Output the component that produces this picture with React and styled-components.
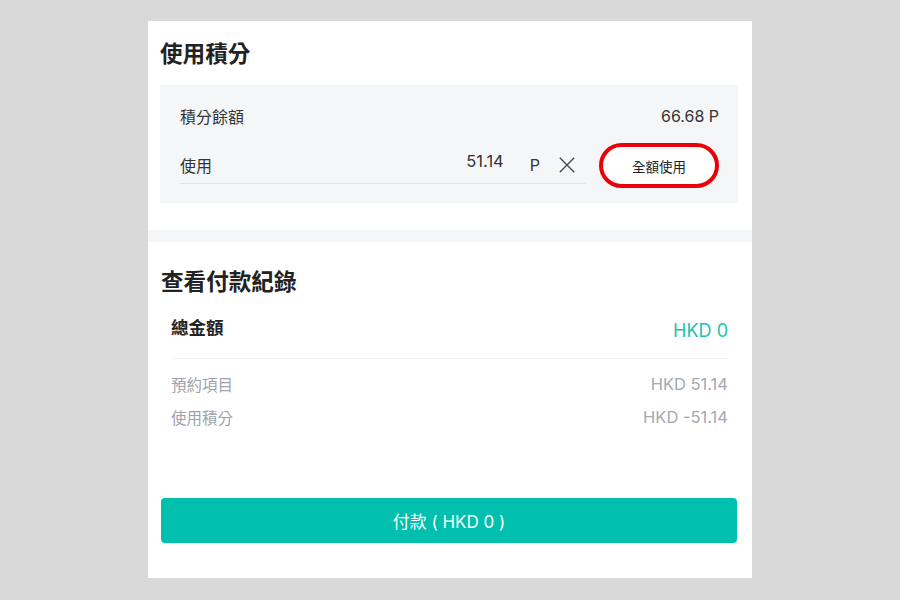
import React from "react";
import styled, { createGlobalStyle } from "styled-components";

const GlobalStyle = createGlobalStyle`
  html, body {
    margin: 0;
    padding: 0;
    background: #d9d9d9;
  }
  body {
    font-family: Inter, "Noto Sans CJK TC", sans-serif;
    color: #222;
  }
`;

const Page = styled.div`
  display: flex;
  justify-content: center;
  padding-top: 21px;
  height: 600px;
  box-sizing: border-box;
`;

const Card = styled.div`
  width: 604px;
  height: 557px;
  background: #fff;
  display: flex;
  flex-direction: column;
`;

const Section = styled.section`
  padding: ${props => props.pad};
`;

const Title = styled.h2`
  margin: 0;
  font-family: "Noto Sans CJK TC", sans-serif;
  font-size: 22.6px;
  line-height: 30px;
  font-weight: 700;
  color: #222;
`;

const PointsBox = styled.div`
  margin-top: 17px;
  background: #f5f6f8;
  padding: 16px 19px 19px 20px;
  display: flex;
  flex-direction: column;
`;

const BalanceRow = styled.div`
  display: flex;
  justify-content: space-between;
  align-items: center;
  height: 30px;
  font-size: 16px;
  color: #333;
`;

const UseRow = styled.div`
  display: flex;
  align-items: flex-end;
  margin-top: 6px;
`;

const Field = styled.div`
  flex: 1;
  display: flex;
  align-items: center;
  box-sizing: border-box;
  height: 47px;
  padding-top: 9px;
  border-bottom: 1px solid #e2e4e8;
  font-size: 16px;
  color: #333;
`;

const FieldValue = styled.span`
  flex: 1;
  text-align: right;
  margin-top: -8px;
  font-size: 16.5px;
`;

const Unit = styled.span`
  margin-left: 26px;
`;

const Clear = styled.span`
  display: flex;
  margin-left: 19px;
  margin-right: 11px;
`;

const FullButton = styled.button`
  margin-left: 13px;
  margin-bottom: -4px;
  width: 120px;
  height: 45px;
  border: 4px solid #e8000b;
  border-radius: 24px;
  background: #fff;
  font-family: "Noto Sans CJK TC", sans-serif;
  font-size: 13.5px;
  color: #222;
  padding: 0;
  cursor: pointer;
`;

const Band = styled.div`
  height: 12px;
  background: #f5f6f8;
`;

const SummaryRow = styled.div`
  display: flex;
  justify-content: space-between;
  align-items: center;
  padding: 0 10px;
  height: ${props => props.h}px;
  font-size: ${props => props.size}px;
  font-weight: ${props => (props.bold ? 700 : 400)};
  color: ${props => props.color};
`;

const Label = styled.span`
  font-family: "Noto Sans CJK TC", sans-serif;
  margin-top: ${props => props.shift || 0}px;
`;

const Amount = styled.span`
  color: ${props => props.color};
  font-size: ${props => props.size}px;
  font-weight: 400;
  margin-top: ${props => props.shift || 0}px;
`;

const Divider = styled.div`
  margin: 0 10px 8px;
  height: 1px;
  background: #f1f2f4;
`;

const PayButton = styled.button`
  margin: auto 0 35px 13px;
  width: 576px;
  height: 45px;
  border: none;
  border-radius: 4px;
  background: #00bfae;
  color: #fff;
  font-family: Inter, "Noto Sans CJK TC", sans-serif;
  font-size: 17px;
  cursor: pointer;
`;

const CloseIcon = () => (
  <svg width="16" height="16" viewBox="0 0 16 16" fill="none">
    <path d="M0.8 0.8 L15.2 15.2 M15.2 0.8 L0.8 15.2" stroke="#444" strokeWidth="1.3" />
  </svg>
);

export default function App() {
  return (
    <>
      <GlobalStyle />
      <Page>
        <Card>
          <Section pad="17px 14px 27px 12px">
            <Title>使用積分</Title>
            <PointsBox>
              <BalanceRow>
                <Label>積分餘額</Label>
                <span>66.68 P</span>
              </BalanceRow>
              <UseRow>
                <Field>
                  <Label>使用</Label>
                  <FieldValue>51.14</FieldValue>
                  <Unit>P</Unit>
                  <Clear>
                    <CloseIcon />
                  </Clear>
                </Field>
                <FullButton>全額使用</FullButton>
              </UseRow>
            </PointsBox>
          </Section>
          <Band />
          <Section pad="24px 14px 0 13px">
            <Title>查看付款紀錄</Title>
            <SummaryRow h={62} size={17.5} bold color="#222">
              <Label shift={-2}>總金額</Label>
              <Amount color="#1cc3b2" size={18} shift={6}>HKD 0</Amount>
            </SummaryRow>
            <Divider />
            <SummaryRow h={33} size={15.5} color="#9ea3ab">
              <Label>預約項目</Label>
              <Amount color="#a4a9b1" size={16.5}>HKD 51.14</Amount>
            </SummaryRow>
            <SummaryRow h={33} size={15.5} color="#9ea3ab">
              <Label>使用積分</Label>
              <Amount color="#a4a9b1" size={16.5}>HKD -51.14</Amount>
            </SummaryRow>
          </Section>
          <PayButton>付款 ( HKD 0 )</PayButton>
        </Card>
      </Page>
    </>
  );
}
